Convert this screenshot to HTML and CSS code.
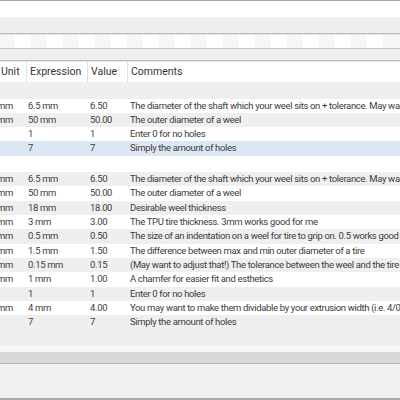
FILE: index.html
```html
<!DOCTYPE html>
<html>
<head>
<meta charset="utf-8">
<link rel="stylesheet" href="styles.css">
</head>
<body>
<div class="window">
  <div class="strip white h16"></div>
  <div class="strip grey h16"></div>
  <div class="rule double"></div>
  <div class="toolbar"></div>
  <div class="rule single"></div>
  <div class="strip grey h11"></div>
  <div class="rule double"></div>

  <div class="table">
    <div class="row head">
      <div class="cell c-unit">Unit</div>
      <div class="cell c-expr">Expression</div>
      <div class="cell c-val">Value</div>
      <div class="cell c-com">Comments</div>
    </div>

    <div class="row group odd"></div>
    <div class="row data even"><div class="cell c-unit">mm</div><div class="cell c-expr">6.5 mm</div><div class="cell c-val">6.50</div><div class="cell c-com">The diameter of the shaft which your weel sits on + tolerance. May want to adjust</div></div>
    <div class="row data odd"><div class="cell c-unit">mm</div><div class="cell c-expr">50 mm</div><div class="cell c-val">50.00</div><div class="cell c-com">The outer diameter of a weel</div></div>
    <div class="row data even"><div class="cell c-unit"></div><div class="cell c-expr">1</div><div class="cell c-val">1</div><div class="cell c-com">Enter 0 for no holes</div></div>
    <div class="row data selected"><div class="cell c-unit"></div><div class="cell c-expr">7</div><div class="cell c-val">7</div><div class="cell c-com">Simply the amount of holes</div></div>

    <div class="row group even"></div>
    <div class="row data odd"><div class="cell c-unit">mm</div><div class="cell c-expr">6.5 mm</div><div class="cell c-val">6.50</div><div class="cell c-com">The diameter of the shaft which your weel sits on + tolerance. May want to adjust</div></div>
    <div class="row data even"><div class="cell c-unit">mm</div><div class="cell c-expr">50 mm</div><div class="cell c-val">50.00</div><div class="cell c-com">The outer diameter of a weel</div></div>
    <div class="row data odd"><div class="cell c-unit">mm</div><div class="cell c-expr">18 mm</div><div class="cell c-val">18.00</div><div class="cell c-com">Desirable weel thickness</div></div>
    <div class="row data even"><div class="cell c-unit">mm</div><div class="cell c-expr">3 mm</div><div class="cell c-val">3.00</div><div class="cell c-com">The TPU tire thickness. 3mm works good for me</div></div>
    <div class="row data odd"><div class="cell c-unit">mm</div><div class="cell c-expr">0.5 mm</div><div class="cell c-val">0.50</div><div class="cell c-com">The size of an indentation on a weel for tire to grip on. 0.5 works good</div></div>
    <div class="row data even"><div class="cell c-unit">mm</div><div class="cell c-expr">1.5 mm</div><div class="cell c-val">1.50</div><div class="cell c-com">The difference between max and min outer diameter of a tire</div></div>
    <div class="row data odd"><div class="cell c-unit">mm</div><div class="cell c-expr">0.15 mm</div><div class="cell c-val">0.15</div><div class="cell c-com">(May want to adjust that!) The tolerance between the weel and the tire</div></div>
    <div class="row data even"><div class="cell c-unit">mm</div><div class="cell c-expr">1 mm</div><div class="cell c-val">1.00</div><div class="cell c-com">A chamfer for easier fit and esthetics</div></div>
    <div class="row data odd"><div class="cell c-unit"></div><div class="cell c-expr">1</div><div class="cell c-val">1</div><div class="cell c-com">Enter 0 for no holes</div></div>
    <div class="row data even"><div class="cell c-unit">mm</div><div class="cell c-expr">4 mm</div><div class="cell c-val">4.00</div><div class="cell c-com">You may want to make them dividable by your extrusion width (i.e. 4/0.4)</div></div>
    <div class="row data odd"><div class="cell c-unit"></div><div class="cell c-expr">7</div><div class="cell c-val">7</div><div class="cell c-com">Simply the amount of holes</div></div>
  </div>

  <div class="tail"></div>
  <div class="tail light"></div>
  <div class="hbar"></div>
  <div class="panel"></div>
</div>
</body>
</html>
```

FILE: styles.css
```css
html, body {
  margin: 0;
  padding: 0;
}

body {
  width: 400px;
  height: 400px;
  overflow: hidden;
  background: #f0f0f0;
  font-family: Roboto, "Liberation Sans", sans-serif;
  color: #3c3c3c;
}

.window {
  border-top: 1px solid #a6a6a6;
  border-bottom: 2px solid #a9a9a9;
  height: 397px;
  overflow: hidden;
  display: flex;
  flex-direction: column;
}

.strip { flex: none; }
.white { background: #ffffff; }
.grey { background: #efefef; }
.h16 { height: 16px; }
.h11 { height: 11px; }

.rule { flex: none; }
.rule.double {
  border-top: 1px solid #bdbdbd;
  border-bottom: 1px solid #e4e4e4;
}
.rule.single {
  border-top: 1px solid #c4c4c4;
}

.toolbar {
  flex: none;
  height: 13px;
  background: repeating-linear-gradient(90deg, #f7f7f7 0 16px, #ffffff 16px 32px);
  background-position: -1px 0;
}

.table {
  flex: none;
  margin-left: -14px;
  width: 414px;
}

.row {
  display: grid;
  grid-template-columns: 40px 61px 40px 1fr;
  align-items: center;
}

.cell {
  white-space: nowrap;
  overflow: hidden;
}

.head {
  height: 20px;
  background: #ffffff;
  font-size: 10.5px;
  color: #353535;
}
.head .cell {
  height: 20px;
  line-height: 20px;
}
.head .c-unit { padding-left: 15px; }
.head .c-expr { padding-left: 3px; border-left: 1px solid #e2e2e2; }
.head .c-val { padding-left: 3px; border-left: 1px solid #e2e2e2; }
.head .c-com { padding-left: 3px; border-left: 1px solid #e2e2e2; }

.group { height: 16.5px; }

.data {
  height: 14.3px;
  font-size: 9.5px;
  line-height: 14.3px;
  letter-spacing: -0.35px;
}
.data .c-unit { padding-left: 11px; }
.data .c-expr { padding-left: 2px; }
.data .c-val { padding-left: 3px; }
.data .c-com { padding-left: 3px; }

.odd { background: #efefef; }
.even { background: #ffffff; }
.selected { background: #dce7f3; }

.tail {
  flex: none;
  height: 15.5px;
  background: #efefef;
}
.tail.light {
  height: 7px;
  background: #f6f6f6;
}

.hbar {
  flex: none;
  height: 11px;
  background: #d8d8d8;
  border-bottom: 1px solid #b6b6b6;
}

.panel {
  flex: 1;
  background: #f0f0f0;
}
```
